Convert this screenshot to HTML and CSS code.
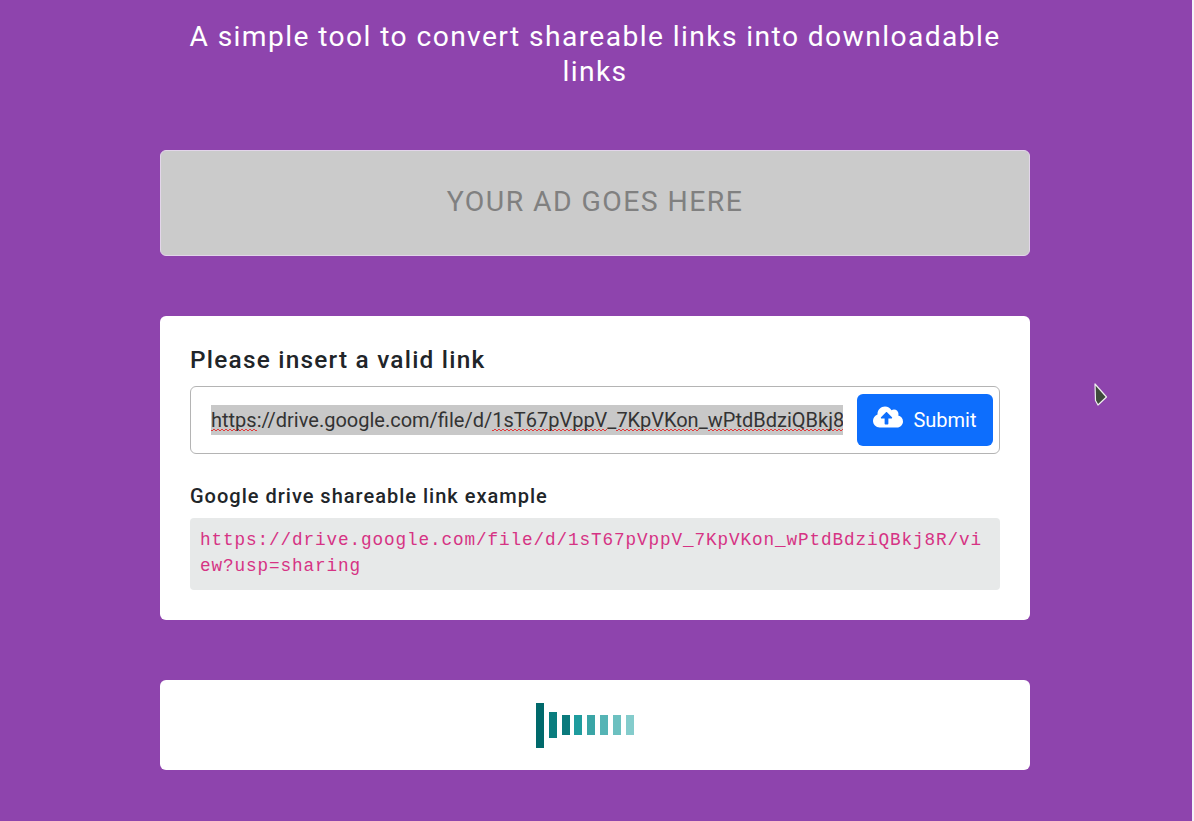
FILE: index.html
```html
<!DOCTYPE html>
<html lang="en">
<head>
  <meta charset="UTF-8" />
  <meta name="viewport" content="width=device-width, initial-scale=1.0" />
  <title>Direct link generator</title>
  <link rel="stylesheet" href="styles.css">
</head>
<body>
  <div class="container">
    <h1 class="title">A simple tool to convert shareable links into downloadable links</h1>

    <div class="ad">YOUR AD GOES HERE</div>

    <div class="card form-card">
      <h2>Please insert a valid link</h2>
      <div class="input-group">
        <div class="link-input"><span class="selected"><span class="typo">https</span>://drive.google.com/file/d/<span class="typo">1sT67pVppV</span>_<span class="typo">7KpVKon</span>_<span class="typo">wPtdBdziQBkj8</span></span></div>
        <button class="submit-btn">
          <svg class="cloud" viewBox="0 0 640 512" width="30" height="24" aria-hidden="true">
            <path fill="#fff" d="M537.6 226.6c4.1-10.7 6.4-22.4 6.4-34.6 0-53-43-96-96-96-19.7 0-38.1 6-53.3 16.2C367 64.2 315.3 32 256 32c-88.4 0-160 71.6-160 160 0 2.7.1 5.4.2 8.1C40.2 219.8 0 273.2 0 336c0 79.5 64.5 144 144 144h368c70.7 0 128-57.3 128-128 0-61.9-44-113.6-102.4-125.4zM393.4 288H328v112c0 8.8-7.2 16-16 16h-48c-8.8 0-16-7.2-16-16V288h-65.4c-14.3 0-21.4-17.2-11.3-27.3l105.4-105.4c6.2-6.2 16.4-6.2 22.6 0l105.4 105.4c10.1 10.1 2.9 27.3-11.3 27.3z"/>
          </svg>
          Submit
        </button>
      </div>
      <h3>Google drive shareable link example</h3>
      <code class="example">https://drive.google.com/file/d/1sT67pVppV_7KpVKon_wPtdBdziQBkj8R/view?usp=sharing</code>
    </div>

    <div class="card loader-card">
      <div class="loader">
        <span class="bar bar-1"></span>
        <span class="bar bar-2"></span>
        <span class="bar bar-3"></span>
        <span class="bar bar-4"></span>
        <span class="bar bar-5"></span>
        <span class="bar bar-6"></span>
        <span class="bar bar-7"></span>
        <span class="bar bar-8"></span>
      </div>
    </div>
  </div>

  <svg class="cursor" viewBox="0 0 15 24" width="15" height="24" aria-hidden="true">
    <path fill="#3f4a3c" stroke="#efefef" stroke-width="1.2" stroke-linejoin="round" d="M1 1l.5 16.500 2.500 4.500 8.500-8z"/>
  </svg>
</body>
</html>
```

FILE: styles.css
```css
* {
  box-sizing: border-box;
}
html {
  background: #f3f3f8;
}
body {
  font-family: Roboto, sans-serif;
  background: #8e44ad;
  color: #212529;
  margin: 0 2px 0 0;
  padding: 19px 2px 0 0;
  min-height: 821px;
  overflow: hidden;
}
.container {
  width: 870px;
  margin: 0 auto;
}
.title {
  width: 830px;
  margin: 0 auto 61px;
  font-size: 28.2px;
  font-weight: 400;
  line-height: 35px;
  letter-spacing: 0.05em;
  text-align: center;
  color: #fff;
}
.ad {
  height: 106px;
  margin-bottom: 60px;
  padding-bottom: 4px;
  display: flex;
  align-items: center;
  justify-content: center;
  background: #cbcbcb;
  border: 1px solid #e3d5ea;
  border-radius: 6px;
  font-size: 28.4px;
  letter-spacing: 0.05em;
  color: #808080;
}
.card {
  background: #fff;
  border-radius: 6px;
}
.form-card {
  height: 304px;
  padding: 29px 30px 30px;
  margin-bottom: 60px;
}
h2 {
  margin: 0 0 11px;
  font-size: 24.4px;
  font-weight: 500;
  line-height: 30px;
  letter-spacing: 0.05em;
}
.input-group {
  height: 68px;
  display: flex;
  align-items: center;
  justify-content: space-between;
  padding: 0 6px 0 20px;
  border: 1px solid #b4b4b4;
  border-radius: 6px;
}
.link-input {
  width: 632px;
  overflow: hidden;
  white-space: nowrap;
  font-size: 20px;
  line-height: 30px;
  color: #333;
}
.selected {
  display: inline-block;
  background: #c8c8c8;
}
/* spellcheck squiggle, text-decoration wavy came out too big */
.typo {
  background-image:
    linear-gradient(90deg, #e23a3a 50%, transparent 50%),
    linear-gradient(90deg, #e23a3a 50%, transparent 50%);
  background-size: 4px 1px;
  background-repeat: repeat-x;
  background-position: 0 calc(100% - 1px), 2px calc(100% - 2px);
}
.submit-btn {
  width: 136px;
  height: 52px;
  display: flex;
  align-items: center;
  justify-content: center;
  gap: 10px;
  padding: 0;
  border: none;
  border-radius: 6px;
  background: #0d6efd;
  color: #fff;
  font-family: inherit;
  font-size: 20px;
  cursor: pointer;
}
.cloud {
  margin-top: -6px;
}
h3 {
  margin: 30px 0 10px;
  font-size: 20px;
  font-weight: 500;
  line-height: 24px;
  letter-spacing: 0.05em;
}
.example {
  display: block;
  height: 72px;
  padding: 9px 10px;
  background: #e7e9e9;
  border-radius: 4px;
  font-family: "Liberation Mono", monospace;
  font-size: 17.7px;
  line-height: 26px;
  letter-spacing: 0.05em;
  color: #d63384;
  word-break: break-all;
}
.loader-card {
  height: 90px;
  padding-left: 376px;
  display: flex;
  align-items: center;
}
.loader {
  display: flex;
  align-items: center;
  gap: 4.8px;
}
.bar {
  display: block;
  width: 8px;
  height: 20px;
  background: #00696b;
}
.bar-1 {
  height: 45px;
}
.bar-2 {
  height: 26px;
  background: #0a7d7e;
}
.bar-3 {
  background: #0a7a7c;
}
.bar-4 {
  background: #1f9c9e;
}
.bar-5 {
  background: #3aa5a6;
}
.bar-6 {
  background: #55b4b5;
}
.bar-7 {
  background: #6cc0c0;
}
.bar-8 {
  background: #84cccc;
}
.cursor {
  position: absolute;
  left: 1094px;
  top: 383px;
}
```
